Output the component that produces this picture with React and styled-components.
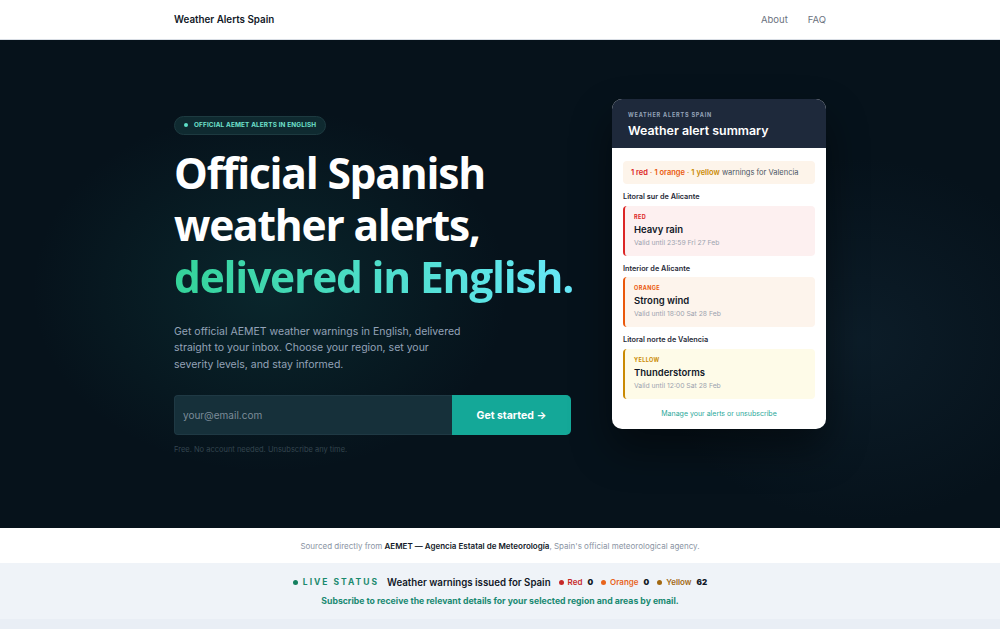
import styled, { createGlobalStyle } from "styled-components";

const GlobalStyle = createGlobalStyle`
    * { box-sizing: border-box; }
    body {
        margin: 0;
        font-family: Inter, "Noto Sans", sans-serif;
        background: #e9eef5;
        color: #0f172a;
    }
    p, h1, h2 { margin: 0; }
`

const Container = styled.div`
    width: 652px;
    margin: 0 auto;
`

const Header = styled.header`
    height: 40px;
    background: #ffffff;
    border-bottom: 1px solid #d9dee5;

    ${Container}{
        height: 100%;
        display: flex;
        align-items: center;
        justify-content: space-between;
    }

    .brand{
        font-size: 9.8px;
        font-weight: 600;
        color: #111827;
    }

    nav{
        display: flex;
        gap: 20px;
        font-size: 9.5px;
        color: #6b7280;
    }
`

const Hero = styled.section`
    height: 488px;
    background:
        radial-gradient(ellipse 340px 260px at 270px 250px, rgba(22, 110, 105, 0.22), transparent 70%),
        radial-gradient(ellipse 300px 260px at 860px 300px, rgba(30, 60, 80, 0.25), transparent 70%),
        #06121b;

    ${Container}{
        display: flex;
        justify-content: space-between;
        align-items: flex-start;
    }
`

const Left = styled.div`
    padding-top: 71px;
    width: 410px;
`

const Badge = styled.div`
    display: inline-flex;
    align-items: center;
    gap: 6px;
    height: 19px;
    padding: 0 9px;
    border-radius: 10px;
    background: #0f2a30;
    border: 1px solid #1d3a40;
    color: #6ee0cc;
    font-size: 6.4px;
    font-weight: 700;
    letter-spacing: 0.15px;

    &::before{
        content: '';
        width: 4px;
        height: 4px;
        border-radius: 50%;
        background: #5ee0c8;
    }
`

const Title = styled.h1`
    margin-top: 12px;
    font-family: "Open Sans", "Noto Sans", sans-serif;
    font-size: 42.5px;
    line-height: 52px;
    font-weight: 700;
    color: #ffffff;
    letter-spacing: -1.2px;
    white-space: nowrap;

    span{
        background: linear-gradient(90deg, #34d399, #67e8f9);
        -webkit-background-clip: text;
        background-clip: text;
        color: transparent;
    }
`

const Lead = styled.p`
    margin-top: 21px;
    width: 295px;
    font-size: 10.5px;
    line-height: 16.5px;
    color: #94a3b8;
`

const Form = styled.form`
    margin-top: 22px;
    display: flex;
    width: 397px;
    height: 40px;
`

const Input = styled.input`
    flex: 1;
    min-width: 0;
    background: #16303a;
    border: 1px solid #1f3944;
    border-right: none;
    border-radius: 4px 0 0 4px;
    padding: 0 8px;
    font-family: inherit;
    font-size: 10px;
    color: #e2e8f0;
    outline: none;

    &::placeholder{ color: #7c8c99; }
`

const Button = styled.button`
    width: 119px;
    border: none;
    border-radius: 0 5px 5px 0;
    background: #14a898;
    color: #ffffff;
    font-family: inherit;
    font-size: 10.5px;
    font-weight: 700;
`

const Note = styled.p`
    margin-top: 10px;
    font-size: 7.5px;
    color: #34454f;
`

const Card = styled.div`
    margin-top: 59px;
    width: 214px;
    border-radius: 10px;
    overflow: hidden;
    background: #ffffff;
    box-shadow: 0 20px 40px rgba(0, 0, 0, 0.45);
`

const CardHead = styled.div`
    background: #1e293b;
    padding: 13px 16px 10px;

    .kicker{
        font-size: 5.5px;
        font-weight: 700;
        letter-spacing: 0.8px;
        color: #94a3b8;
    }

    h2{
        margin-top: 5px;
        font-size: 12.4px;
        font-weight: 600;
        color: #ffffff;
    }
`

const CardBody = styled.div`
    padding: 13px 11px 11px;
`

const Summary = styled.div`
    background: #fdf4ea;
    border-radius: 4px;
    padding: 7px 8px;
    font-size: 7.5px;
    color: #4b5563;

    b{ font-weight: 600; }
    .red{ color: #dc2626; }
    .orange{ color: #ea580c; }
    .yellow{ color: #ca8a04; }
`

const Region = styled.p`
    margin: 8px 0 4.5px;
    font-size: 7.3px;
    font-weight: 600;
    color: #1f2937;
`

const levels = {
    red: { line: '#dc2626', bg: '#fdf0f0', text: '#dc2626' },
    orange: { line: '#ea580c', bg: '#fdf4ec', text: '#ea580c' },
    yellow: { line: '#ca8a04', bg: '#fefbe8', text: '#ca8a04' },
};

const Alert = styled.div`
    height: 50px;
    padding: 8px 8px 0 9px;
    border-left: 2px solid ${props => levels[props.$level].line};
    border-radius: 4px;
    background: ${props => levels[props.$level].bg};

    .level{
        font-size: 5.5px;
        font-weight: 700;
        letter-spacing: 0.4px;
        color: ${props => levels[props.$level].text};
    }

    .name{
        margin-top: 4px;
        font-size: 9.5px;
        font-weight: 600;
        color: #111827;
    }

    .until{
        margin-top: 3px;
        font-size: 6.8px;
        color: #9ca3af;
    }
`

const Manage = styled.p`
    margin-top: 10px;
    text-align: center;
    font-size: 7px;
    color: #2aa89a;
`

const Source = styled.div`
    height: 35px;
    background: #ffffff;
    display: flex;
    align-items: center;
    justify-content: center;
    font-size: 8px;
    color: #8a94a3;

    b{
        color: #111827;
        font-weight: 600;
    }
`

const Status = styled.section`
    height: 56px;
    background: #eff3f8;
    display: flex;
    flex-direction: column;
    align-items: center;
    justify-content: center;
    gap: 8px;
`

const StatusRow = styled.div`
    display: flex;
    align-items: center;
    gap: 8px;
`

const Live = styled.span`
    display: flex;
    align-items: center;
    gap: 5px;
    font-size: 8.5px;
    font-weight: 700;
    letter-spacing: 2px;
    color: #1a8a6e;

    &::before{
        content: '';
        width: 5px;
        height: 5px;
        border-radius: 50%;
        background: #14805f;
    }
`

const StatusTitle = styled.span`
    font-size: 9.7px;
    font-weight: 600;
    color: #111827;
`

const dots = { red: '#c62828', orange: '#e8641c', yellow: '#a16812' };

const Count = styled.span`
    display: flex;
    align-items: center;
    gap: 4px;
    font-size: 8px;
    font-weight: 600;
    color: ${props => dots[props.$level]};

    &::before{
        content: '';
        width: 5px;
        height: 5px;
        border-radius: 50%;
        background: ${props => dots[props.$level]};
    }

    b{
        color: #111827;
        margin-left: 1px;
    }
`

const Subscribe = styled.p`
    font-size: 8.7px;
    font-weight: 700;
    color: #1a8a72;
`

function AlertItem(props){
    return(
        <>
            <Region>{props.$region}</Region>
            <Alert $level={props.$level}>
                <p className='level'>{props.$level.toUpperCase()}</p>
                <p className='name'>{props.$name}</p>
                <p className='until'>{props.$until}</p>
            </Alert>
        </>
    );
}

export default function App(){
    return(
        <>
            <GlobalStyle/>
            <Header>
                <Container>
                    <span className='brand'>Weather Alerts Spain</span>
                    <nav>
                        <span>About</span>
                        <span>FAQ</span>
                    </nav>
                </Container>
            </Header>

            <Hero>
                <Container>
                    <Left>
                        <Badge>OFFICIAL AEMET ALERTS IN ENGLISH</Badge>
                        <Title>
                            Official Spanish<br/>
                            weather alerts,<br/>
                            <span>delivered in English.</span>
                        </Title>
                        <Lead>
                            Get official AEMET weather warnings in English, delivered straight to your inbox. Choose your region, set your severity levels, and stay informed.
                        </Lead>
                        <Form onSubmit={e => e.preventDefault()}>
                            <Input placeholder='your@email.com'/>
                            <Button>Get started →</Button>
                        </Form>
                        <Note>Free. No account needed. Unsubscribe any time.</Note>
                    </Left>

                    <Card>
                        <CardHead>
                            <p className='kicker'>WEATHER ALERTS SPAIN</p>
                            <h2>Weather alert summary</h2>
                        </CardHead>
                        <CardBody>
                            <Summary>
                                <b className='red'>1 red</b> <span className='orange'>·</span> <b className='orange'>1 orange</b> <span className='yellow'>·</span> <b className='yellow'>1 yellow</b> warnings for Valencia
                            </Summary>
                            <AlertItem $region='Litoral sur de Alicante' $level='red' $name='Heavy rain' $until='Valid until 23:59 Fri 27 Feb'/>
                            <AlertItem $region='Interior de Alicante' $level='orange' $name='Strong wind' $until='Valid until 18:00 Sat 28 Feb'/>
                            <AlertItem $region='Litoral norte de Valencia' $level='yellow' $name='Thunderstorms' $until='Valid until 12:00 Sat 28 Feb'/>
                            <Manage>Manage your alerts or unsubscribe</Manage>
                        </CardBody>
                    </Card>
                </Container>
            </Hero>

            <Source>
                <span>Sourced directly from <b>AEMET — Agencia Estatal de Meteorología</b>, Spain's official meteorological agency.</span>
            </Source>

            <Status>
                <StatusRow>
                    <Live>LIVE STATUS</Live>
                    <StatusTitle>Weather warnings issued for Spain</StatusTitle>
                    <Count $level='red'>Red <b>0</b></Count>
                    <Count $level='orange'>Orange <b>0</b></Count>
                    <Count $level='yellow'>Yellow <b>62</b></Count>
                </StatusRow>
                <Subscribe>Subscribe to receive the relevant details for your selected region and areas by email.</Subscribe>
            </Status>
        </>
    );
}
